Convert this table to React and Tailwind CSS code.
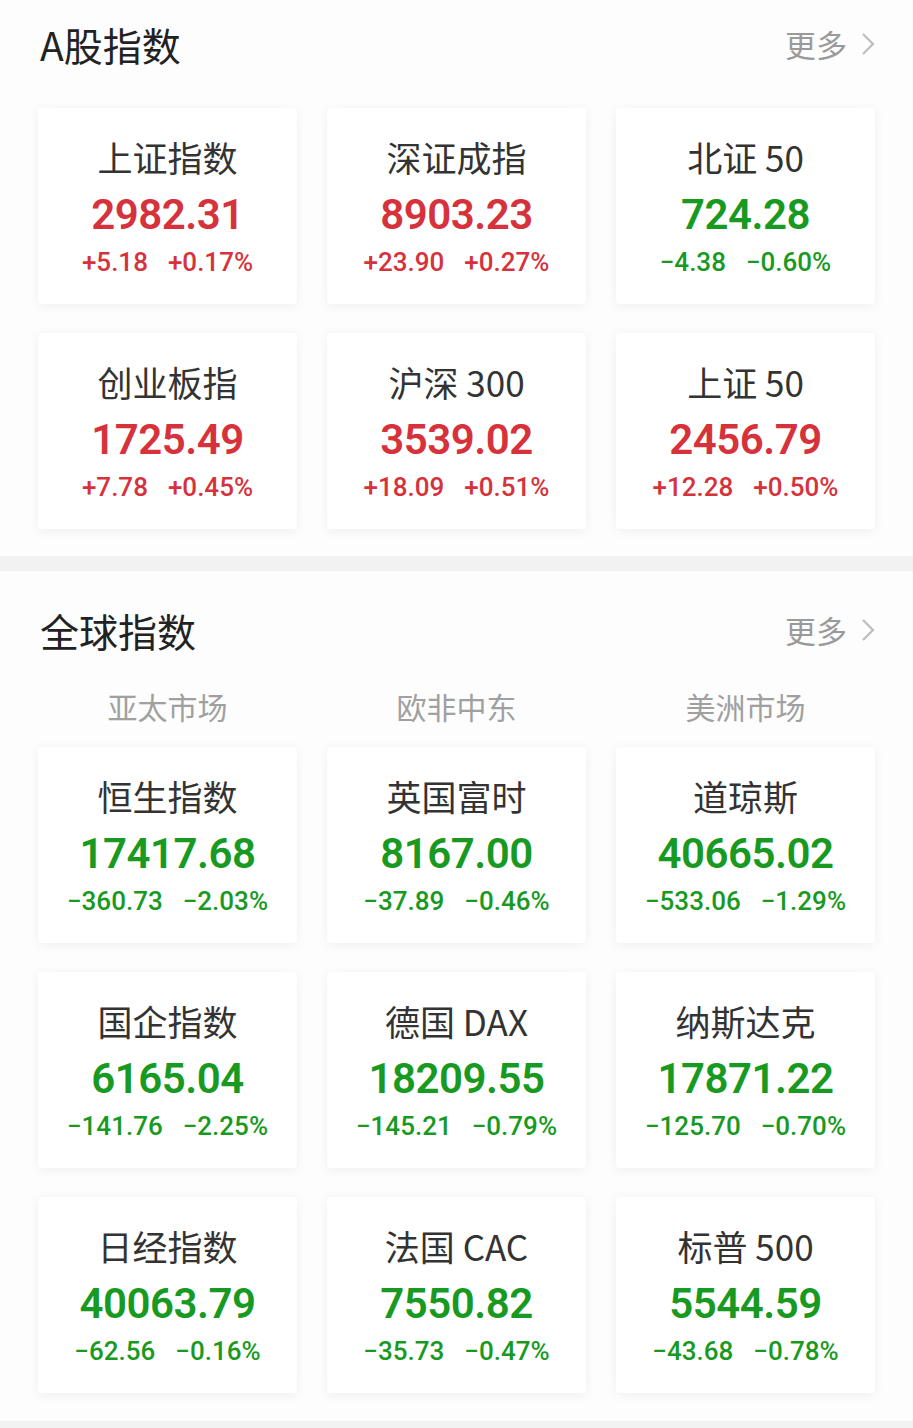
import React from "react";

const RED = "text-[#d6323c]";
const GREEN = "text-[#189a22]";

const aShares = [
  { name: "上证指数", value: "2982.31", chg: "+5.18", pct: "+0.17%", up: true },
  { name: "深证成指", value: "8903.23", chg: "+23.90", pct: "+0.27%", up: true },
  { name: "北证 50", value: "724.28", chg: "−4.38", pct: "−0.60%", up: false },
  { name: "创业板指", value: "1725.49", chg: "+7.78", pct: "+0.45%", up: true },
  { name: "沪深 300", value: "3539.02", chg: "+18.09", pct: "+0.51%", up: true },
  { name: "上证 50", value: "2456.79", chg: "+12.28", pct: "+0.50%", up: true },
];

const global = [
  { name: "恒生指数", value: "17417.68", chg: "−360.73", pct: "−2.03%" },
  { name: "英国富时", value: "8167.00", chg: "−37.89", pct: "−0.46%" },
  { name: "道琼斯", value: "40665.02", chg: "−533.06", pct: "−1.29%" },
  { name: "国企指数", value: "6165.04", chg: "−141.76", pct: "−2.25%" },
  { name: "德国 DAX", value: "18209.55", chg: "−145.21", pct: "−0.79%" },
  { name: "纳斯达克", value: "17871.22", chg: "−125.70", pct: "−0.70%" },
  { name: "日经指数", value: "40063.79", chg: "−62.56", pct: "−0.16%" },
  { name: "法国 CAC", value: "7550.82", chg: "−35.73", pct: "−0.47%" },
  { name: "标普 500", value: "5544.59", chg: "−43.68", pct: "−0.78%" },
];

const font = { fontFamily: '"Noto Sans CJK SC", sans-serif' };
const num = { fontFamily: "Roboto, sans-serif" };

function More() {
  return (
    <div className="flex items-center gap-[14px] text-[31px] leading-[40px] text-[#9a9a9a]">
      <span>更多</span>
      <svg width="14" height="24" viewBox="0 0 14 24" fill="none">
        <polyline points="2,2 12,12 2,22" stroke="#bdbdbd" strokeWidth="2.2" />
      </svg>
    </div>
  );
}

function Card({ item, up }) {
  const color = up ? RED : GREEN;
  return (
    <div className="h-[196px] bg-white rounded-[4px] shadow-[0_2px_12px_rgba(0,0,0,0.06)] flex flex-col items-center">
      <div className="mt-[29px] text-[35px] leading-[40px] text-[#333]">{item.name}</div>
      <div className={`mt-[13px] text-[42px] leading-[50px] font-semibold tracking-[-0.5px] ${color}`} style={num}>
        {item.value}
      </div>
      <div className={`mt-[7px] flex gap-[20px] text-[26px] leading-[30px] font-medium ${color}`} style={num}>
        <span>{item.chg}</span>
        <span>{item.pct}</span>
      </div>
    </div>
  );
}

export default function App() {
  return (
    <div className="w-[913px] h-[1428px] bg-[#fdfdfd] overflow-hidden" style={font}>
      {/* A股 */}
      <section className="px-[38px] pb-[27px]">
        <div className="h-[88px] flex items-center justify-between">
          <h2 className="text-[39px] leading-[48px] text-[#222] pl-[2px]">A股指数</h2>
          <More />
        </div>
        <div className="mt-[20px] grid grid-cols-3 gap-x-[30px] gap-y-[29px]">
          {aShares.map((it) => (
            <Card key={it.name} item={it} up={it.up} />
          ))}
        </div>
      </section>

      <div className="h-[15px] bg-[#f2f2f2]" />

      {/* 全球 */}
      <section className="px-[38px]">
        <div className="pt-[35px] flex items-center justify-between">
          <h2 className="text-[39px] leading-[48px] text-[#222] pl-[2px]">全球指数</h2>
          <More />
        </div>
        <div className="mt-[32px] grid grid-cols-3 gap-x-[30px] text-center text-[30px] leading-[40px] text-[#a0a0a0]">
          <span>亚太市场</span>
          <span>欧非中东</span>
          <span>美洲市场</span>
        </div>
        <div className="mt-[21px] grid grid-cols-3 gap-x-[30px] gap-y-[29px]">
          {global.map((it) => (
            <Card key={it.name} item={it} up={false} />
          ))}
        </div>
      </section>

      <div className="mt-[28px] h-[10px] bg-[#f2f2f2]" />
    </div>
  );
}
